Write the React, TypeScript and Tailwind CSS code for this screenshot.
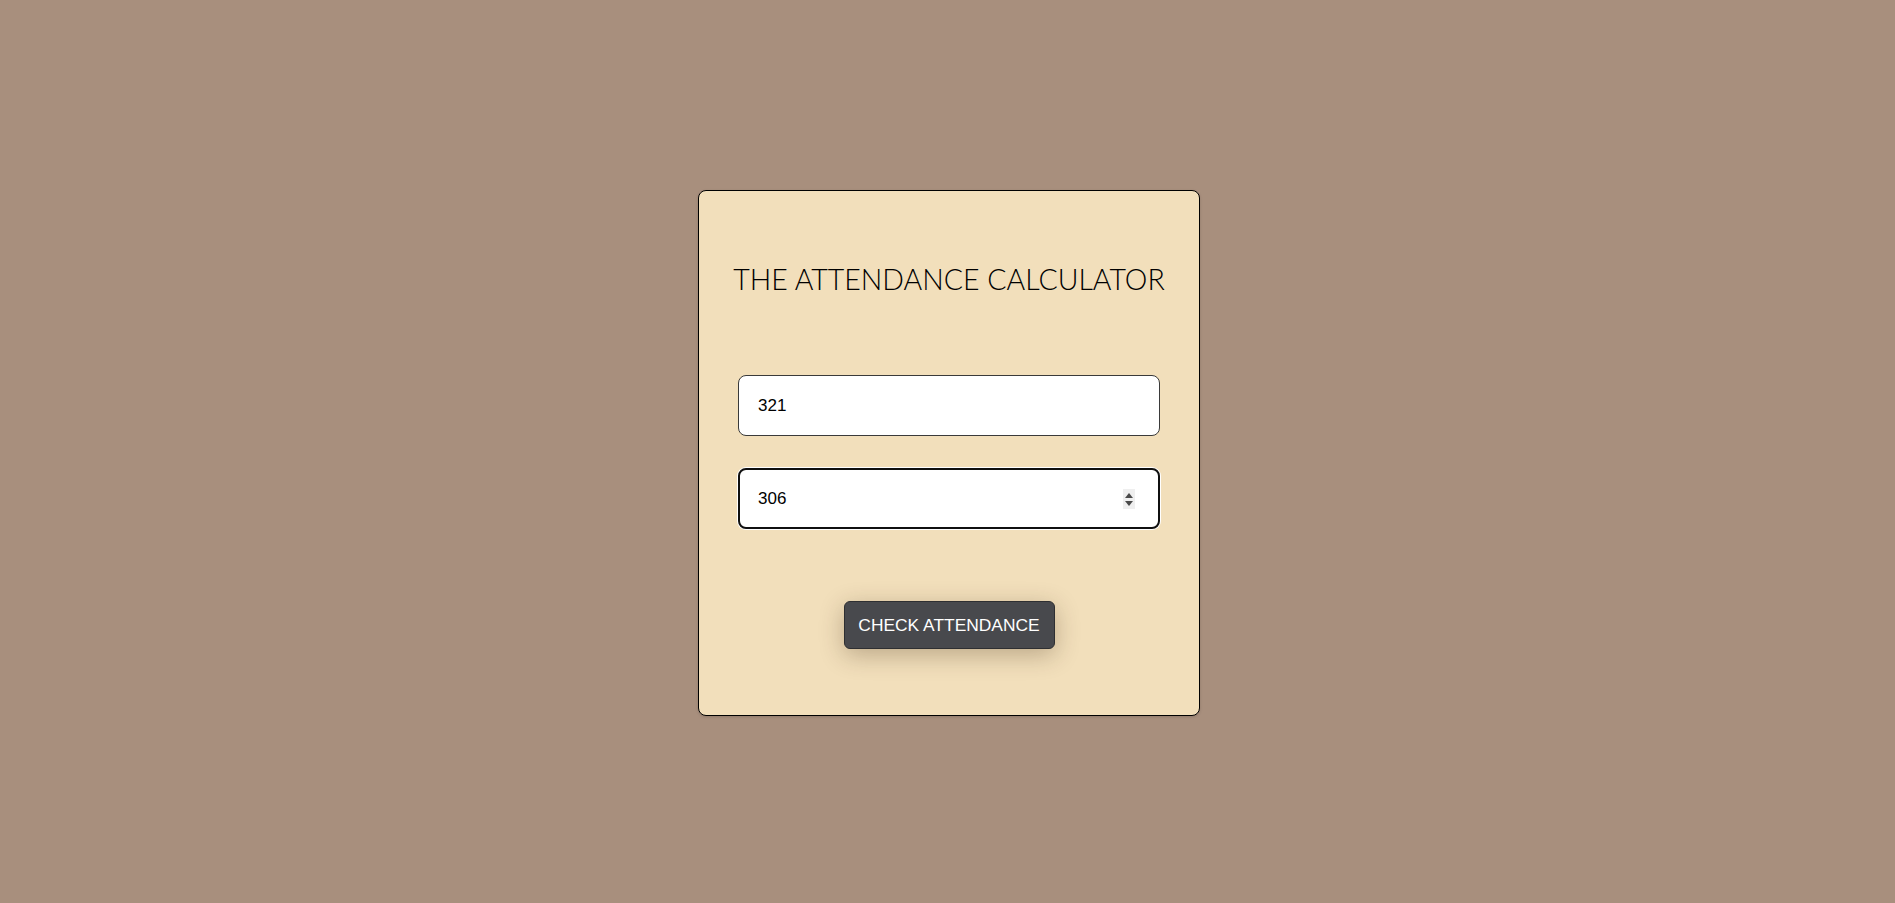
import { useState } from 'react';

export default function App() {
	const [total, setTotal] = useState('321');
	const [attended, setAttended] = useState('306');

	return (
		<div className="flex h-screen justify-center overflow-hidden bg-[#a88f7d] pl-[3px] pt-[190px]">
			<div className="flex h-[526px] w-[502px] flex-col items-center rounded-lg border border-black bg-[#f2dfbb] px-[39px] pt-[70px] shadow-[0_1px_3px_rgba(0,0,0,0.15)]">
				<h1 className="whitespace-nowrap text-[28.5px] font-light leading-[36px] text-black [font-family:Lato,'Open_Sans',sans-serif]">
					THE ATTENDANCE CALCULATOR
				</h1>

				<input
					type="text"
					value={total}
					onChange={(e) => setTotal(e.target.value)}
					className="mt-[78px] h-[61px] w-full rounded-lg border border-[#3a3a3a] bg-white px-[19px] text-[17px] text-black outline-none [font-family:'Liberation_Sans',Arial,sans-serif]"
				/>

				<div className="relative mt-[32px] w-full">
					<input
						type="text"
						value={attended}
						onChange={(e) => setAttended(e.target.value)}
						className="h-[61px] w-full rounded-lg border-2 border-[#101010] bg-white px-[18px] text-[17px] text-black outline-none ring-1 ring-white [font-family:'Liberation_Sans',Arial,sans-serif]"
					/>
					<div className="absolute right-[25px] top-[21px] flex h-[20px] w-[12px] flex-col items-center justify-center gap-[3px] bg-[#efefef]">
						<div className="h-0 w-0 border-x-[4px] border-b-[5px] border-x-transparent border-b-[#4a4a4a]" />
						<div className="h-0 w-0 border-x-[4px] border-t-[5px] border-x-transparent border-t-[#4a4a4a]" />
					</div>
				</div>

				<button
					type="button"
					className="mt-[72px] h-[48px] w-[211px] rounded-md border border-[#2e2f32] bg-[#48494d] text-[17.4px] text-white shadow-[0_6px_24px_rgba(60,40,20,0.3)] [font-family:'Liberation_Sans',Arial,sans-serif]"
				>
					CHECK ATTENDANCE
				</button>
			</div>
		</div>
	);
}
